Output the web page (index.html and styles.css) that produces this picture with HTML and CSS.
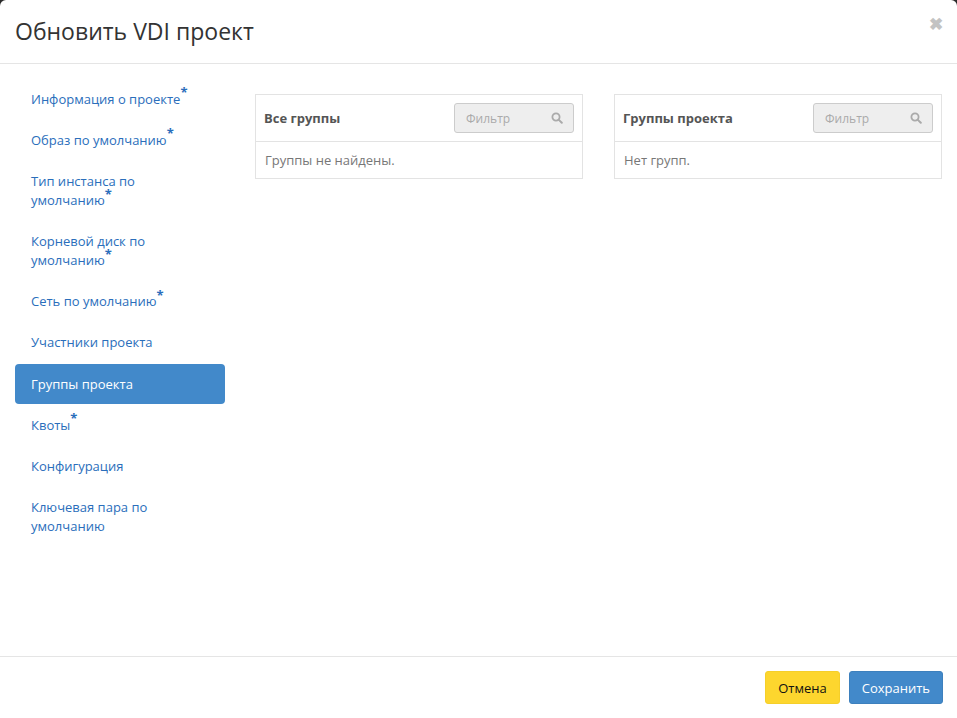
FILE: index.html
```html
<!DOCTYPE html>
<html lang="ru">
<head>
<meta charset="utf-8">
<title>Обновить VDI проект</title>
<link rel="stylesheet" href="styles.css">
</head>
<body>
<div class="modal">
  <div class="modal-header">
    <h4 class="modal-title">Обновить VDI проект</h4>
    <span class="close">&#10006;</span>
  </div>
  <div class="modal-body">
    <ul class="wizard-nav">
      <li><a>Информация о проекте<sup>*</sup></a></li>
      <li><a>Образ по умолчанию<sup>*</sup></a></li>
      <li><a>Тип инстанса по умолчанию<sup>*</sup></a></li>
      <li><a>Корневой диск по умолчанию<sup>*</sup></a></li>
      <li><a>Сеть по умолчанию<sup>*</sup></a></li>
      <li><a>Участники проекта</a></li>
      <li class="active"><a>Группы проекта</a></li>
      <li><a>Квоты<sup>*</sup></a></li>
      <li><a>Конфигурация</a></li>
      <li><a>Ключевая пара по умолчанию</a></li>
    </ul>
    <div class="wizard-content">
      <div class="panel">
        <div class="panel-head">
          <span class="panel-title">Все группы</span>
          <div class="filter">
            <span class="placeholder">Фильтр</span>
            <svg class="search" width="12" height="12" viewBox="0 0 12 12"><circle cx="5" cy="5" r="3.6" fill="none" stroke="#aaa" stroke-width="1.8"/><line x1="7.6" y1="7.6" x2="10.8" y2="10.8" stroke="#aaa" stroke-width="2" stroke-linecap="round"/></svg>
          </div>
        </div>
        <div class="panel-body">Группы не найдены.</div>
      </div>
      <div class="panel">
        <div class="panel-head">
          <span class="panel-title">Группы проекта</span>
          <div class="filter">
            <span class="placeholder">Фильтр</span>
            <svg class="search" width="12" height="12" viewBox="0 0 12 12"><circle cx="5" cy="5" r="3.6" fill="none" stroke="#aaa" stroke-width="1.8"/><line x1="7.6" y1="7.6" x2="10.8" y2="10.8" stroke="#aaa" stroke-width="2" stroke-linecap="round"/></svg>
          </div>
        </div>
        <div class="panel-body">Нет групп.</div>
      </div>
    </div>
  </div>
  <div class="modal-footer">
    <button class="btn btn-cancel">Отмена</button>
    <button class="btn btn-save">Сохранить</button>
  </div>
</div>
</body>
</html>
```
FILE: styles.css
```css
html, body {
  margin: 0;
  padding: 0;
  height: 100%;
  background: #2a2a2a;
}
body {
  font-family: "Open Sans", "Liberation Sans", sans-serif;
  font-size: 13px;
  color: #333;
}
.modal {
  background: #fff;
  height: 718px;
  display: flex;
  flex-direction: column;
  border-radius: 6px 6px 0 0;
  box-sizing: border-box;
}
.modal-header {
  height: 64px;
  box-sizing: border-box;
  border-bottom: 1px solid #e5e5e5;
  display: flex;
  align-items: center;
  justify-content: space-between;
  padding: 0 14px 0 15px;
}
.modal-title {
  margin: 0;
  font-size: 23px;
  font-weight: 400;
  color: #333;
  padding-bottom: 2px;
}
.close {
  color: #c3c3c3;
  font-size: 17px;
  font-weight: bold;
  line-height: 1;
  align-self: flex-start;
  margin-top: 15px;
}
.modal-body {
  flex: 1;
  display: flex;
  padding: 13px 15px 0 15px;
}
.wizard-nav {
  list-style: none;
  margin: 0;
  padding: 0;
  width: 210px;
  flex: none;
}
.wizard-nav li {
  margin-top: 1.2px;
}
.wizard-nav li:first-child {
  margin-top: 2px;
}
.wizard-nav a {
  display: block;
  padding: 10.5px 14px 10.5px 16px;
  line-height: 19px;
  color: #2a6ebb;
  border-radius: 4px;
}
.wizard-nav sup {
  font-size: 13px;
  font-weight: bold;
  line-height: 0;
  position: relative;
  top: -1px;
  vertical-align: super;
}
.wizard-nav li.active a {
  background: #4289ca;
  color: #fff;
}
.wizard-content {
  flex: 1;
  margin-left: 30px;
  padding-top: 17px;
  display: grid;
  grid-template-columns: 1fr 1fr;
  column-gap: 31px;
  align-items: start;
}
.panel {
  border: 1px solid #e3e3e3;
}
.panel-head {
  height: 46px;
  border-bottom: 1px solid #e3e3e3;
  display: flex;
  align-items: center;
  justify-content: space-between;
  padding: 0 8px 0 8px;
}
.panel-title {
  font-weight: bold;
  color: #555;
  font-size: 13px;
}
.filter {
  width: 118px;
  height: 28px;
  background: #eee;
  border: 1px solid #ccc;
  border-radius: 3px;
  display: flex;
  align-items: center;
  justify-content: space-between;
}
.placeholder {
  color: #aaa;
  font-size: 12px;
  margin-left: 11px;
}
.search {
  margin-right: 10px;
}
.panel-body {
  height: 36px;
  line-height: 37px;
  padding: 0 9px;
  color: #777;
  font-size: 13px;
}
.modal-footer {
  height: 62px;
  box-sizing: border-box;
  border-top: 1px solid #e5e5e5;
  display: flex;
  justify-content: flex-end;
  align-items: center;
  gap: 9px;
  padding: 0 14px 0 15px;
}
.btn {
  font-family: "Open Sans", "Liberation Sans", sans-serif;
  font-size: 13px;
  height: 33px;
  border-radius: 3px;
  border: 1px solid transparent;
  padding: 0 12px;
  cursor: pointer;
}
.btn-cancel {
  background: #fdd62e;
  border-color: #f5cf2a;
  color: #111;
}
.btn-save {
  background: #4289ca;
  border-color: #3d80bd;
  color: #fff;
}
```
